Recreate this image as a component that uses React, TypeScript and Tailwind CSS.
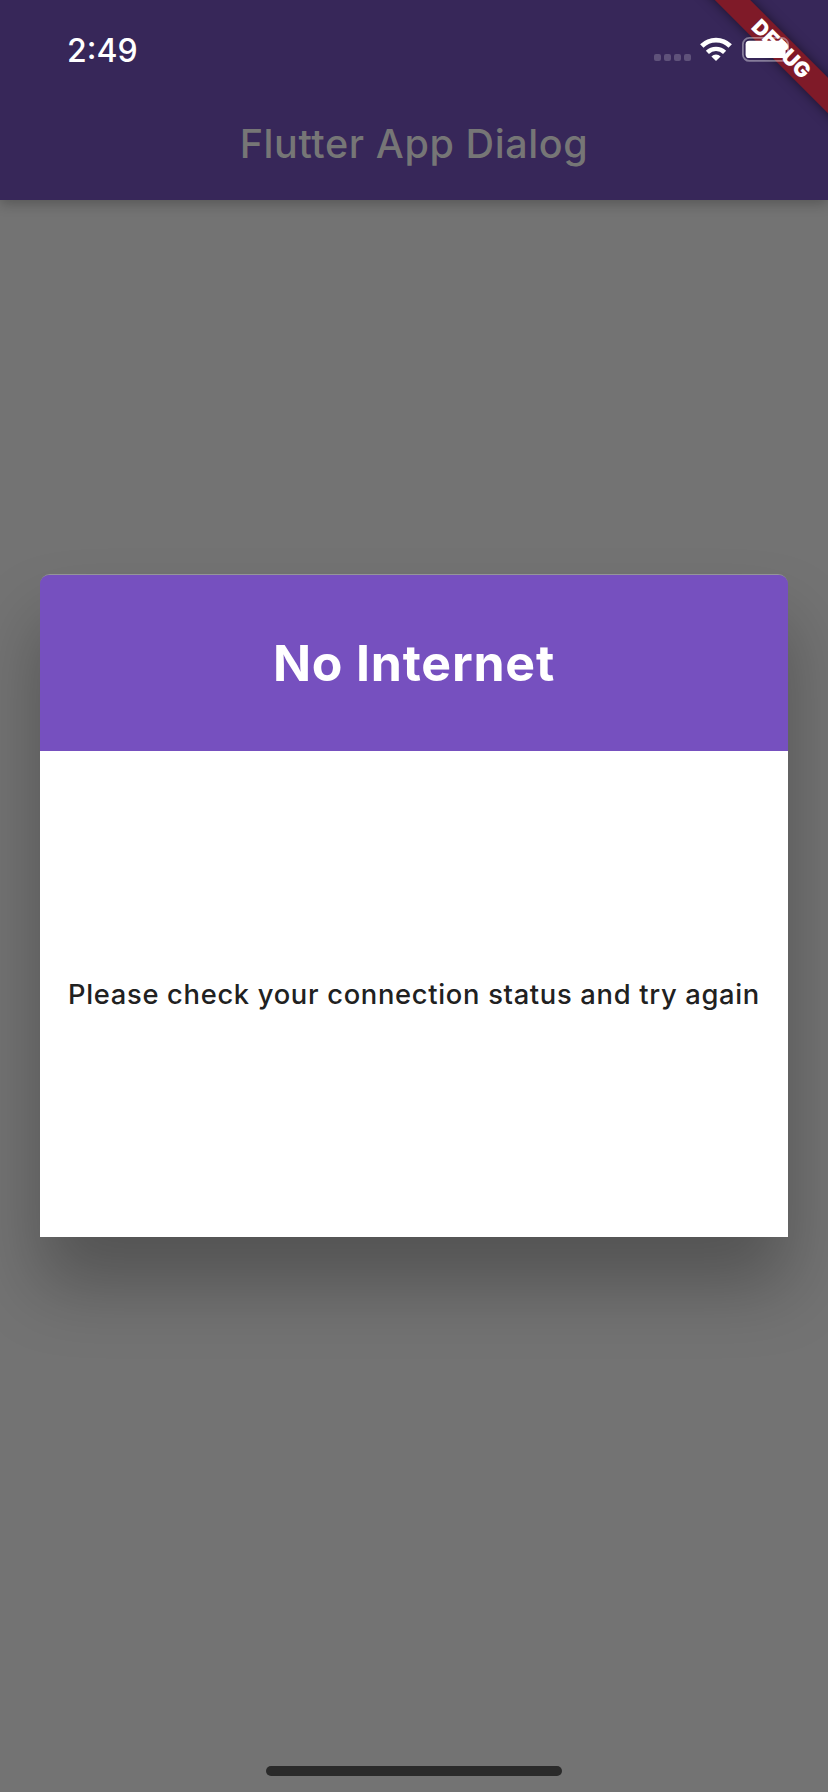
import React from "react";

function WifiIcon() {
  return (
    <svg className="h-6 w-8" viewBox="0 0 32 24" fill="none">
      <path d="M16 24 L11.4 19.4 A6.6 6.6 0 0 1 20.6 19.4 Z" fill="#fff" />
      <path d="M7.4 15.4 A12.2 12.2 0 0 1 24.6 15.4" stroke="#fff" strokeWidth="4.4" />
      <path d="M1.8 9 A20 20 0 0 1 30.2 9" stroke="#fff" strokeWidth="4.8" />
    </svg>
  );
}

function BatteryIcon() {
  return (
    <svg className="relative z-10 h-[25px] w-[51px]" viewBox="0 0 51 25" fill="none">
      <rect x="0.9" y="0.9" width="45.2" height="23" rx="6.5" stroke="#fff" strokeOpacity="0.4" strokeWidth="1.8" />
      <rect x="3.6" y="3.8" width="40" height="17.2" rx="3.6" fill="#fff" />
    </svg>
  );
}

function StatusBar() {
  return (
    <div className="flex h-[88px] items-start justify-between pt-[37px] pr-[36px] pl-[67px]">
      <span className="text-[32px] leading-[27px] font-medium text-white">2:49</span>
      <div className="-mr-[1px] flex items-start">
        <div className="mt-[17px] mr-[9px] flex gap-[3px]">
          {[0, 1, 2, 3].map((i) => (
            <span key={i} className="h-[7px] w-[7px] rounded-[2px] bg-[#5f527a]" />
          ))}
        </div>
        <WifiIcon />
        <div className="ml-[10px]">
          <BatteryIcon />
        </div>
      </div>
    </div>
  );
}

export default function App() {
  return (
    <div className="relative flex h-[1792px] w-[828px] flex-col overflow-hidden bg-[#737373] font-['Inter',sans-serif]">
      <header className="h-[200px] bg-[#372759] shadow-[0_4px_12px_0_rgba(0,0,0,0.24)]">
        <StatusBar />
        <h1 className="flex h-[112px] items-center justify-center pt-[2px] text-[39.5px] font-medium tracking-[0.6px] text-[#767676]">
          Flutter App Dialog
        </h1>
      </header>
      <main className="flex-1 px-[40px] pt-[374px]">
        <section className="flex h-[663px] flex-col rounded-t-[10px] border-t border-[#94949a] shadow-[0_48px_70px_0_rgba(0,0,0,0.28)]">
          <h2 className="flex h-[176px] items-center justify-center rounded-t-[9px] bg-[#7650bf] text-[50px] font-bold tracking-[0.8px] text-white">
            No Internet
          </h2>
          <p className="flex flex-1 items-center justify-center bg-white pt-[2px] text-[27.3px] font-medium tracking-[0.7px] whitespace-nowrap text-[#212121]">
            Please check your connection status and try again
          </p>
        </section>
      </main>
      <footer className="flex h-[26px] items-start justify-center">
        <div className="h-[10px] w-[296px] rounded-full bg-[#2a2a2a]" />
      </footer>
      <div className="absolute top-[35px] left-[660px] flex h-[25px] w-[240px] rotate-45 items-center justify-center bg-[#7f1a28] pl-[4px] text-[21px] font-black text-white shadow-[0_0_12px_rgba(0,0,0,0.5)]">
        DEBUG
      </div>
    </div>
  );
}
